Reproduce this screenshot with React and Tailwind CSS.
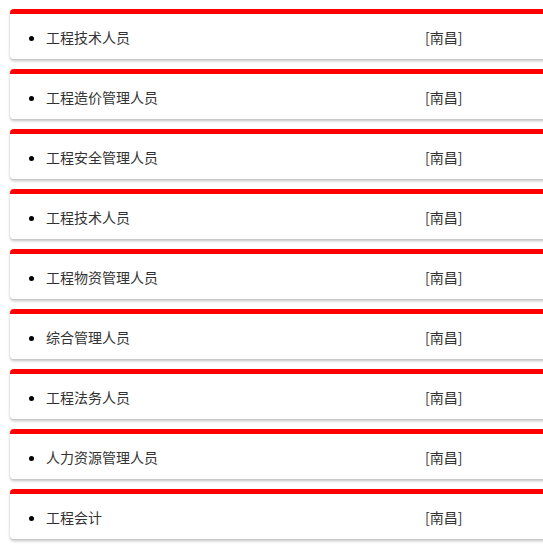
import React from 'react';

const jobs = [
  '工程技术人员',
  '工程造价管理人员',
  '工程安全管理人员',
  '工程技术人员',
  '工程物资管理人员',
  '综合管理人员',
  '工程法务人员',
  '人力资源管理人员',
  '工程会计',
];

const App = () => {
  return (
    <div className="w-[543px] h-[546px] overflow-hidden bg-white pl-[10px] pt-[9px]" style={{ fontFamily: '"Noto Sans CJK SC", "Noto Sans", sans-serif' }}>
      {jobs.map((job, i) => (
        <div
          key={i}
          className="w-[560px] h-[50px] mb-[10px] bg-white border-t-[5px] border-[#ff0000] rounded-[4px] shadow-[0_2px_3px_rgba(0,0,0,0.25)]"
        >
          <ul className="list-disc marker:text-black pl-[36px] pt-[13px] text-[14px] leading-[20px] text-[#333]">
            <li>
              <div className="flex">
                <span className="w-[379px]">{job}</span>
                <span>[南昌]</span>
              </div>
            </li>
          </ul>
        </div>
      ))}
    </div>
  );
};

export default App;
